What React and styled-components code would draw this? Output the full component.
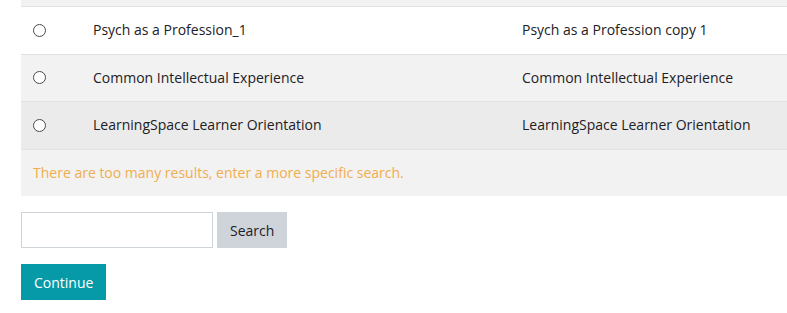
import React from "react"
import styled, { createGlobalStyle } from "styled-components"

const GlobalStyle = createGlobalStyle`
  body {
    margin: 0;
    background: #fff;
    font-family: "Open Sans", "Noto Sans", sans-serif;
    color: #1d2125;
  }
`

const Page = styled.div`
  padding-left: 21px;
  overflow: hidden;
  width: 787px;
  box-sizing: border-box;
`

const Table = styled.table`
  border-collapse: collapse;
  width: 766px;
  font-size: 14px;
`

const Row = styled.tr`
  background: ${p => p.bg};
  border-bottom: ${p => (p.last ? "none" : "1px solid #dee2e6")};
`

const Cell = styled.td`
  padding: 12px;
  line-height: 22.5px;
  vertical-align: middle;
  width: ${p => p.w || "auto"};
  box-sizing: content-box;
`

const CutCell = styled.td`
  padding: 0;
  height: 6px;
`

const Radio = styled.input.attrs({ type: "radio" })`
  appearance: none;
  display: block;
  margin: 0;
  width: 13px;
  height: 13px;
  border: 1px solid #4a4a4a;
  border-radius: 50%;
  background: #fff;
  box-sizing: border-box;
`

const Message = styled.td`
  padding: 12px;
  line-height: 22.5px;
  color: #f0ad4e;
`

const SearchRow = styled.div`
  display: flex;
  gap: 4px;
  margin-top: 16px;
`

const Field = styled.input`
  width: 192px;
  height: 36px;
  box-sizing: border-box;
  border: 1px solid #ced4da;
  margin: 0;
  font: inherit;
`

const Button = styled.button`
  height: 36px;
  padding: 0 13px;
  border: none;
  margin: 0;
  background: ${p => p.bg};
  color: ${p => p.fg};
  font-family: "Open Sans", "Noto Sans", sans-serif;
  font-size: 14px;
`

const Actions = styled.div`
  margin-top: 16px;
`

const rows = [
  { name: "Psych as a Profession_1", copy: "Psych as a Profession copy 1", bg: "#fff" },
  { name: "Common Intellectual Experience", copy: "Common Intellectual Experience", bg: "#f2f2f2" },
  { name: "LearningSpace Learner Orientation", copy: "LearningSpace Learner Orientation", bg: "#ebebeb" },
]

export default function App() {
  return (
    <Page>
      <GlobalStyle />
      <Table>
        <tbody>
          <Row bg="#f2f2f2">
            <CutCell colSpan={3} />
          </Row>
          {rows.map(r => (
            <Row key={r.name} bg={r.bg}>
              <Cell w="36px"><Radio name="course" /></Cell>
              <Cell w="405px">{r.name}</Cell>
              <Cell>{r.copy}</Cell>
            </Row>
          ))}
          <Row bg="#f2f2f2" last>
            <Message colSpan={3}>There are too many results, enter a more specific search.</Message>
          </Row>
        </tbody>
      </Table>
      <SearchRow>
        <Field type="text" />
        <Button bg="#ced4da" fg="#1d2125">Search</Button>
      </SearchRow>
      <Actions>
        <Button bg="#069aa8" fg="#fff">Continue</Button>
      </Actions>
    </Page>
  )
}
